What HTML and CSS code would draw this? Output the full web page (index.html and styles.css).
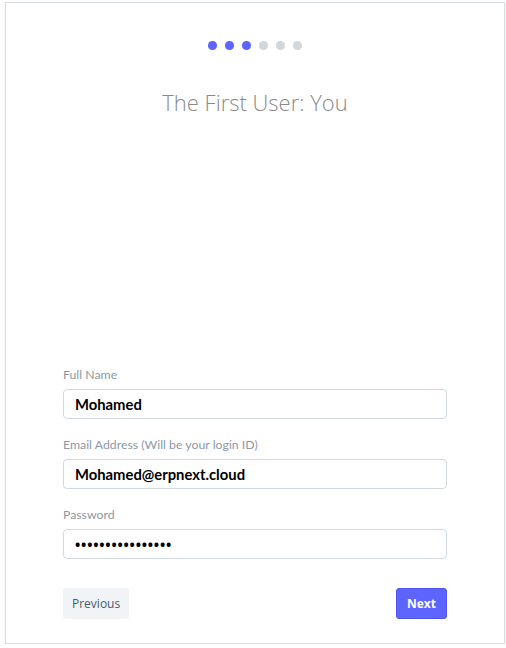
FILE: index.html
```html
<!DOCTYPE html>
<html>
<head>
<meta charset="utf-8">
<link rel="stylesheet" href="styles.css">
</head>
<body>
<div class="card">
  <div class="dots">
    <span class="dot active"></span>
    <span class="dot active"></span>
    <span class="dot active"></span>
    <span class="dot"></span>
    <span class="dot"></span>
    <span class="dot"></span>
  </div>
  <h1 class="title">The First User: You</h1>
  <form class="form">
    <div class="field">
      <label class="label">Full Name</label>
      <input class="input" type="text" value="Mohamed">
    </div>
    <div class="field">
      <label class="label">Email Address (Will be your login ID)</label>
      <input class="input" type="text" value="Mohamed@erpnext.cloud">
    </div>
    <div class="field">
      <label class="label">Password</label>
      <input class="input input-pass" type="password" value="abcdefghijklmnop">
    </div>
    <div class="actions">
      <button type="button" class="btn btn-prev">Previous</button>
      <button type="button" class="btn btn-next">Next</button>
    </div>
  </form>
</div>
</body>
</html>
```

FILE: styles.css
```css
html, body {
  margin: 0;
  padding: 0;
  background: #ffffff;
}
body {
  font-family: "Open Sans", "Noto Sans", sans-serif;
  color: #36414c;
}
.card {
  box-sizing: border-box;
  width: 500px;
  height: 642px;
  margin: 2px 0 0 5px;
  border: 1px solid #d8dde1;
  box-shadow: 0 1px 3px rgba(0,0,0,0.08);
  background: #fff;
  padding: 38px 57px 24px;
  display: flex;
  flex-direction: column;
}
.dots {
  display: flex;
  justify-content: center;
  gap: 8.5px;
  height: 9px;
}
.dot {
  width: 8.5px;
  height: 8.5px;
  border-radius: 50%;
  background: #d1d8dd;
}
.dot.active {
  background: #5e64ff;
}
.title {
  margin: 37px 0 0;
  text-align: center;
  font-size: 22px;
  line-height: 30px;
  font-weight: 300;
  color: #8a8a8a;
}
.form {
  margin-top: auto;
  display: flex;
  flex-direction: column;
}
.field {
  display: flex;
  flex-direction: column;
  margin-bottom: 16px;
}
.label {
  font-family: "Lato", "Open Sans", sans-serif;
  font-size: 12.3px;
  line-height: 18px;
  color: #8d99a6;
  padding-top: 1px;
  margin-bottom: 5px;
}
.input {
  box-sizing: border-box;
  height: 30px;
  width: 100%;
  border: 1px solid #d1d8dd;
  border-radius: 4px;
  padding: 0 11px;
  font-family: "Lato", "Open Sans", sans-serif;
  font-size: 14.8px;
  font-weight: 700;
  color: #000;
  background: #fff;
  outline: none;
}
.input-pass {
  font-family: "Open Sans", "Noto Sans", sans-serif;
  font-size: 14px;
  letter-spacing: 0.8px;
}
.actions {
  margin-top: 13px;
  display: flex;
  justify-content: space-between;
}
.btn {
  height: 31px;
  border: none;
  border-radius: 3px;
  font-family: "Open Sans", "Noto Sans", sans-serif;
  font-size: 12px;
  padding: 0 9px;
  cursor: pointer;
}
.btn-prev {
  background: #f0f4f7;
  color: #4c5a67;
}
.btn-next {
  background: #5e64ff;
  color: #fff;
  font-weight: 700;
  border: 1px solid #4f55e8;
  padding: 0 10px;
}
```
